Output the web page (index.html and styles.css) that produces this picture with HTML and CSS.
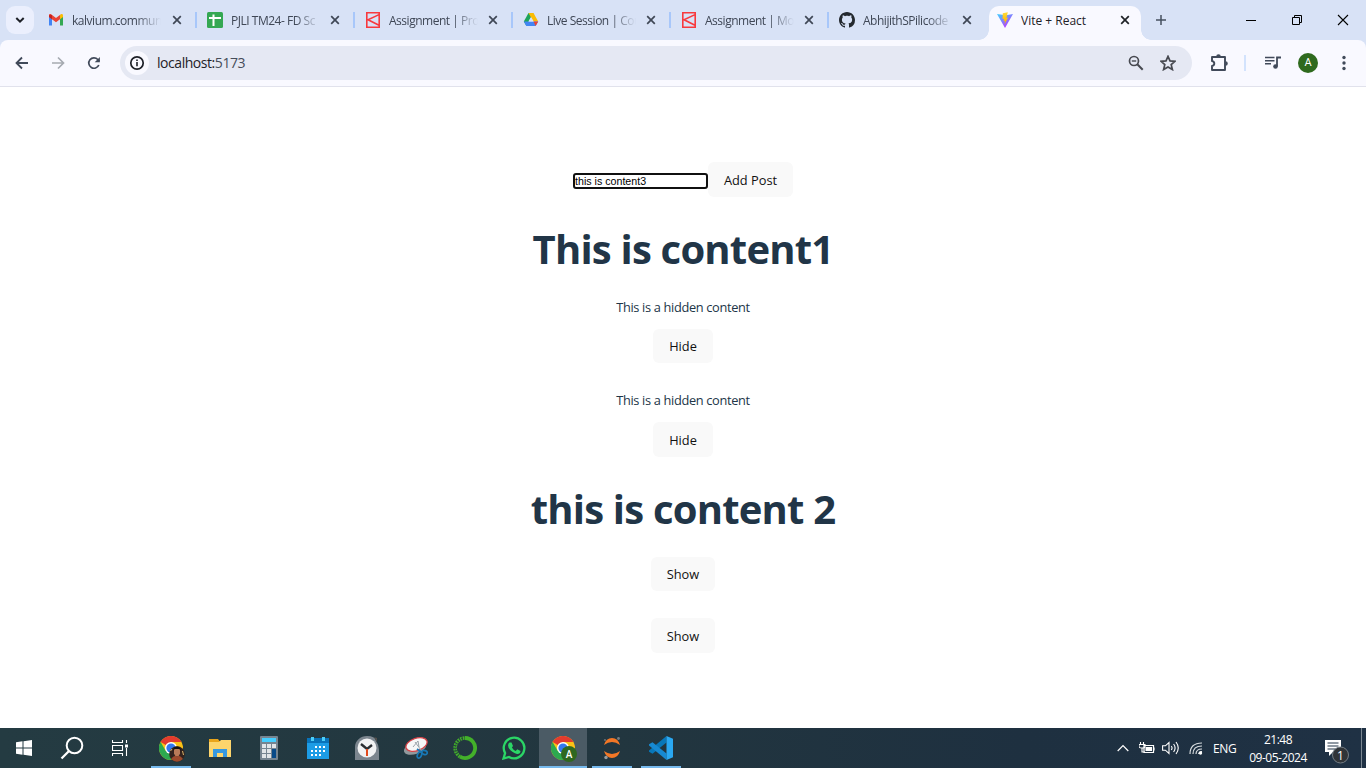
FILE: index.html
```html
<!DOCTYPE html>
<html lang="en">
<head>
<meta charset="utf-8">
<title>Vite + React</title>
<link rel="stylesheet" href="styles.css">
</head>
<body>
<svg class="defs" width="0" height="0">
  <defs>
    <linearGradient id="vblue" x1="0" y1="0" x2=".7" y2="1"><stop offset="0" stop-color="#41d1ff"/><stop offset="1" stop-color="#bd34fe"/></linearGradient>
    <linearGradient id="vyel" x1="0" y1="0" x2="0" y2="1"><stop offset="0" stop-color="#ffdd35"/><stop offset="1" stop-color="#ffa800"/></linearGradient>
    <symbol id="close" viewBox="0 0 10 10"><path d="M1.2 1.2l7.6 7.6M8.8 1.2l-7.6 7.6" stroke="currentColor" stroke-width="1.7"/></symbol>
    <symbol id="kal" viewBox="0 0 16 16"><path d="M1.8.8h12.4v14.4H1.8zM14 2.6L3 7.8l11 5.4" fill="none" stroke="#f8393e" stroke-width="1.6"/></symbol>
    <symbol id="chrome" viewBox="0 0 24 24">
      <circle cx="12" cy="12" r="12" fill="#fbc116"/>
      <path d="M12 12L1.6 6A12 12 0 0 1 22.4 6H12z" fill="#e33b2e"/>
      <path d="M1.6 6A12 12 0 0 0 12 24l5.2-9L12 12 6.8 15z" fill="#2da94f"/>
      <circle cx="12" cy="12" r="6" fill="#fff"/><circle cx="12" cy="12" r="4.6" fill="#3478ee"/>
    </symbol>
  </defs>
</svg>

<div class="tabstrip">
  <div class="search-tabs"><svg width="10" height="10" viewBox="0 0 10 10"><path d="M1.3 3L5 6.7 8.7 3" fill="none" stroke="#1d2027" stroke-width="2"/></svg></div>
  <div class="tab first-tab">
    <svg class="fav" viewBox="0 0 16 16"><path d="M1 4v9.5h3V6.5z" fill="#4285f4"/><path d="M15 4v9.5h-3V6.5z" fill="#34a853"/><path d="M1 3.2C1 2 2.6 1.8 3.4 2.5L8 6l4.6-3.5v4.2L8 10.2 1 5z" fill="#ea4335"/><path d="M12 3l.8-.6C13.8 1.700 15 2.300 15 3.500V5l-3 2.200z" fill="#fbbc04"/><path d="M1 3.300V5l3 2.200V3z" fill="#c5221f"/></svg>
    <span class="title">kalvium.commun</span><svg class="x"><use href="#close"/></svg>
  </div>
  <div class="tab">
    <svg class="fav" viewBox="0 0 16 16"><rect width="16" height="16" rx="1.500" fill="#34a853"/><path d="M2 6h12M6.500 2.500V14" stroke="#fff" stroke-width="2"/></svg>
    <span class="title">PJLI TM24- FD Sc</span><svg class="x"><use href="#close"/></svg>
  </div>
  <div class="tab"><svg class="fav"><use href="#kal"/></svg><span class="title">Assignment | Pro</span><svg class="x"><use href="#close"/></svg></div>
  <div class="tab">
    <svg class="fav" viewBox="0 0 16 16"><path d="M5.500 1L.8 9.500l2.600 4.400L10.500 1z" fill="#1ea45a"/><path d="M5.500 1h5l4.700 8.500h-5z" fill="#fbbc04"/><path d="M3.400 9.500h11.800l-2.600 4.400H3.400L.8 9.500z" fill="#4285f4"/><path d="M10.500 9.500h4.700l-2.600 4.400z" fill="#ea4335"/><path d="M8 5L5.300 9.600h5.400z" fill="#d8e2f6"/></svg>
    <span class="title">Live Session | Cou</span><svg class="x"><use href="#close"/></svg>
  </div>
  <div class="tab"><svg class="fav"><use href="#kal"/></svg><span class="title">Assignment | Mo</span><svg class="x"><use href="#close"/></svg></div>
  <div class="tab last">
    <svg class="fav" viewBox="0 0 16 16"><path fill="#24292f" d="M8 0C3.580 0 0 3.580 0 8c0 3.540 2.290 6.530 5.470 7.590.4.070.550-.17.550-.380 0-.190-.010-.820-.010-1.490-2.010.370-2.530-.490-2.690-.940-.090-.230-.480-.940-.820-1.130-.280-.150-.680-.520-.010-.530.630-.010 1.080.580 1.230.820.720 1.210 1.870.870 2.330.660.070-.520.280-.870.510-1.070-1.780-.2-3.640-.890-3.640-3.950 0-.870.310-1.590.820-2.150-.080-.2-.360-1.020.080-2.120 0 0 .670-.210 2.200.820.640-.180 1.320-.270 2-.270s1.360.090 2 .270c1.530-1.040 2.200-.820 2.200-.820.440 1.100.160 1.920.080 2.120.510.560.820 1.270.820 2.150 0 3.070-1.870 3.750-3.650 3.950.290.250.540.730.540 1.480 0 1.070-.010 1.930-.010 2.200 0 .210.150.460.550.380A8.010 8.010 0 0 0 16 8c0-4.420-3.580-8-8-8z"/></svg>
    <span class="title">AbhijithSPilicode</span><svg class="x"><use href="#close"/></svg>
  </div>
  <div class="tab active">
    <svg class="fav" viewBox="0 0 16 16"><path d="M0 2l8 14 8-14-7 1.200z" fill="url(#vblue)"/><path d="M10.800.2L5.800 1.200 5.500 7l1.600-.3-.5 2.500 1.400-.4-.6 3.800 3.700-7-1.700.3z" fill="url(#vyel)"/></svg>
    <span class="title">Vite + React</span><svg class="x"><use href="#close"/></svg>
  </div>
  <svg class="plus" viewBox="0 0 10 10"><path d="M5 0v10M0 5h10" stroke="#45505f" stroke-width="1.500"/></svg>
  <div class="winbtns">
    <svg width="46" height="40"><path d="M18 20.500h10" stroke="#000"/></svg>
    <svg width="46" height="40"><path d="M18.500 17.500h7v7h-7zM20.500 17.500v-2h7v7h-2" fill="none" stroke="#000"/></svg>
    <svg width="46" height="40"><path d="M18 15l10 10M28 15L18 25" stroke="#000" stroke-width="1.100"/></svg>
  </div>
</div>

<div class="toolbar-bg">
<div class="toolbar">
  <svg class="nav" viewBox="0 0 36 34"><path d="M24 17H13M18 11.500L12.500 17l5.500 5.500" fill="none" stroke="#414a5a" stroke-width="1.800"/></svg>
  <svg class="nav" viewBox="0 0 36 34"><path d="M12 17h11M18 11.500l5.500 5.500-5.500 5.500" fill="none" stroke="#a6aab1" stroke-width="1.700"/></svg>
  <svg class="nav" viewBox="0 0 36 34"><path d="M22.800 19a5.200 5.200 0 1 1-1-5.500l1.500 1.500" fill="none" stroke="#414a5a" stroke-width="1.700"/><path d="M23.900 11v5.200h-5.200z" fill="#414a5a"/></svg>
  <div class="omnibox">
    <div class="info"><svg width="16" height="16" viewBox="0 0 16 16"><circle cx="8" cy="8" r="6.200" fill="none" stroke="#1d2027" stroke-width="1.700"/><path d="M8 7v4.200M8 4.500v1.600" stroke="#1d2027" stroke-width="1.600"/></svg></div>
    <span class="url">localhost:<span>5173</span></span>
    <svg class="oicon" viewBox="0 0 16 16"><circle cx="6" cy="6" r="4.500" fill="none" stroke="#474950" stroke-width="1.700"/><path d="M9.300 9.300l5.400 5.400" stroke="#474950" stroke-width="2"/><path d="M3.800 6h4.400" stroke="#474950" stroke-width="1.400"/></svg>
    <svg class="oicon" viewBox="0 0 16 16"><path d="M8 1.400l2 4.500 5 .45-3.800 3.300 1.200 4.900L8 12l-4.400 2.550 1.200-4.900L1 6.350l5-.45z" fill="none" stroke="#474950" stroke-width="1.700"/></svg>
  </div>
  <svg class="ext" viewBox="0 0 20 20"><path d="M3 4h13v13H3v-4q2.300-.4 2.300-2.500T3 8z" fill="none" stroke="#414a5a" stroke-width="1.900" stroke-linejoin="round"/><path d="M7.200 3.500a2.300 2.300 0 0 1 4.600 0zM16.500 8.200a2.300 2.300 0 0 1 0 4.600z" fill="#414a5a"/></svg>
  <i class="tsep"></i>
  <svg class="music" viewBox="0 0 16 16"><path d="M0 2.500h9.500M0 5.700h9.500M0 8.800h6" stroke="#414a5a" stroke-width="1.600"/><path d="M12 11.500V2.500h4" fill="none" stroke="#414a5a" stroke-width="1.800"/><circle cx="10.500" cy="11.500" r="2.300" fill="#414a5a"/></svg>
  <div class="avatar">A</div>
  <svg class="menu" viewBox="0 0 4 16"><g fill="#414a5a"><circle cx="2" cy="2.500" r="1.700"/><circle cx="2" cy="8" r="1.700"/><circle cx="2" cy="13.500" r="1.700"/></g></svg>
</div>
</div>

<main class="page">
  <div class="form"><input class="field" value="this is content3"><button class="btn add">Add Post</button></div>
  <h1 class="heading">This is content1</h1>
  <p class="hidden-text">This is a hidden content</p>
  <button class="btn hide">Hide</button>
  <p class="hidden-text second">This is a hidden content</p>
  <button class="btn hide tall">Hide</button>
  <h1 class="heading">this is content 2</h1>
  <button class="btn show">Show</button>
  <button class="btn show tall gap">Show</button>
</main>

<footer class="taskbar">
  <div class="cell"><svg width="16" height="16" viewBox="0 0 16 16"><path fill="#fff" d="M0 2.200L6.500 1.300V7.500H0zM7.500 1.200L16 0v7.500H7.500zM0 8.500h6.500v6.200L0 13.800zM7.500 8.500H16V16l-8.500-1.200z"/></svg></div>
  <div class="cell"><svg width="24" height="24" viewBox="0 0 24 24"><circle cx="14.500" cy="9.500" r="7.800" fill="none" stroke="#fff" stroke-width="2"/><path d="M9 15L1.500 22.500" stroke="#fff" stroke-width="2.300"/></svg></div>
  <div class="cell"><svg width="16" height="16" viewBox="0 0 16 16"><path d="M.5 0v2.500h10V0M.5 16v-2.500h10V16M.5 5.500h10v5H.5zM14.500 0v3M14.500 8v8" fill="none" stroke="#fff" stroke-width="1.100"/><path d="M13 4.500h3v3h-3z" fill="#fff"/></svg></div>
  <div class="cell app run first"><svg width="28" height="28" viewBox="0 0 28 28"><use href="#chrome" x="2" y="2" width="24" height="24"/><circle cx="20" cy="20" r="7.800" fill="#33231e"/><path d="M17 15.500q3-3 6 0v4l-1.500 3h-3L17 19.500z" fill="#b87a58"/><path d="M16.300 17q-.3-4.500 3.700-4.500t3.700 4.500l-1.200-2h-5z" fill="#17110f"/><path d="M14 25q2-3 4.500-3.200l1.500 1 1.500-1Q24 22 26 25q-6 5.500-12 0z" fill="#9c4a2c"/><path d="M13.500 17l1.500-2M25.500 17l1 4" stroke="#d9b36a"/></svg></div>
  <div class="cell app"><svg width="22" height="20" viewBox="0 0 22 20"><path d="M0 1h9l1.500 2H22v16H0z" fill="#eaa51b"/><path d="M0 4h10l2-2h10v17H0z" fill="#fdd56c"/><path d="M4 19v-8h14v8h-4v-4H8v4z" fill="#3698df"/></svg></div>
  <div class="cell app"><svg width="18" height="24" viewBox="0 0 18 24"><rect width="18" height="24" rx="1" fill="#768591"/><path d="M2 2h14v4H2z" fill="#45ceff"/><g fill="#e1e5e8"><path d="M2 8h4v4H2zM7 8h4v4H7zM12 8h4v4h-4zM2 13h4v4H2zM7 13h4v4H7zM2 18h4v4H2zM7 18h4v4H7z"/></g><path d="M12 13h4v9h-4z" fill="#084a88"/></svg></div>
  <div class="cell app"><svg width="22" height="24" viewBox="0 0 22 24"><path d="M0 2h22v21H0z" fill="#1c9ce6"/><path d="M0 2h22v5H0z" fill="#0873ba"/><path d="M4 1h3v4H4zM15 1h3v4h-3z" fill="#4ccdf7"/><path d="M8 10h2v2H8zM12 10h2v2h-2zM16 10h2v2h-2zM4 14h2v2H4zM8 14h2v2H8zM12 14h2v2h-2zM16 14h2v2h-2zM4 18h2v2H4zM8 18h2v2H8zM12 18h2v2h-2z" fill="#fff"/></svg></div>
  <div class="cell app"><svg width="24" height="24" viewBox="0 0 24 24"><path d="M0 24V11A12 11 0 0 1 12 0q8 0 9 5 3 4 3 9v10z" fill="#7b858e"/><path d="M19 1l3 1v4z" fill="#534f4b"/><circle cx="12" cy="12" r="9.500" fill="#f1f2f3"/><path d="M6 8l6 5 5-4" fill="none" stroke="#292d31" stroke-width="2.400"/><path d="M12 13v7" stroke="#e34a1d" stroke-width="2"/></svg></div>
  <div class="cell app"><svg width="24" height="24" viewBox="0 0 24 24"><ellipse cx="11" cy="12" rx="11.500" ry="6" transform="rotate(-19 11 12)" fill="#92999d"/><ellipse cx="12.500" cy="8.500" rx="11" ry="6.200" transform="rotate(-19 12.500 8.500)" fill="#f6f7f8" stroke="#d84348" stroke-width="1.300"/><path d="M9 11l5-6 1 6M11 6l6 8" stroke="#9aa3aa" stroke-width="1" fill="none"/><g fill="none" stroke="#1878b5" stroke-width="1.700"><path d="M13 13l5 3.500"/><ellipse cx="15.500" cy="19" rx="2" ry="3.200" transform="rotate(25 15.500 19)"/><ellipse cx="20.500" cy="16.500" rx="2.800" ry="2" transform="rotate(20 20.500 16.500)"/></g></svg></div>
  <div class="cell app"><svg width="24" height="24" viewBox="0 0 24 24"><path d="M12 2a10 10 0 1 1-5 18.600" fill="none" stroke="#43b02a" stroke-width="3.800"/><path d="M7 20.600A10 10 0 0 1 12 2" fill="none" stroke="#43b02a" stroke-width="3.500" stroke-dasharray="1.800 .8"/><path d="M4.300 18A10 10 0 0 1 10 2.200" fill="none" stroke="#253b42" stroke-width="1" stroke-dasharray="1 1.500"/></svg></div>
  <div class="cell app"><svg width="24" height="24" viewBox="0 0 24 24"><path d="M1.500 22.500l1.600-5.400A10.300 10.300 0 1 1 7 21z" fill="none" stroke="#2bd566" stroke-width="2.300"/><path d="M7.500 6.500l2-.1L11 10l-1.100 1.500q1.300 2.400 3.800 3.400l1.600-1.600 3.200 1.600q0 3.200-3.500 3-2-.2-4.300-1.800-5-4-4.600-7.200.2-1.700 1.400-2.400z" fill="#2bd566"/></svg></div>
  <div class="cell app run current"><svg width="28" height="28" viewBox="0 0 28 28"><use href="#chrome" x="2" y="2" width="24" height="24"/><circle cx="20" cy="20" r="8" fill="#2f681f"/><text x="20" y="24" class="badge-a">A</text></svg></div>
  <div class="cell app run"><svg width="18" height="24" viewBox="0 0 18 24"><path d="M1 9q2-7 8-7t8 7Q9 3 1 9zM1 15q2 7 8 7t8-7q-8 6-16 0z" fill="#f37726"/><circle cx="15.500" cy="2.500" r="1.400" fill="#747b81"/><circle cx="3" cy="21.500" r="1.700" fill="#979ca0"/><circle cx="2" cy="4" r=".9" fill="#747b81"/></svg></div>
  <div class="cell app run"><svg width="24" height="24" viewBox="0 0 24 24"><path d="M17.500 0v6.500L3.500 17.700 0 15.800v-1.400z" fill="#0877b9"/><path d="M17.500 24v-6.500L3.500 6.300 0 8.200v1.400z" fill="#1789d2"/><path d="M17.500 0L24 2.800v18.400L17.500 24z" fill="#2aa8f2"/></svg></div>

  <div class="tray">
    <svg class="tr chev" viewBox="0 0 12 8"><path d="M.7 7L6 1.500 11.300 7" fill="none" stroke="#fff" stroke-width="1.200"/></svg>
    <svg class="tr bat" viewBox="0 0 16 12"><path d="M5 3.500h9.500v7H5zM15 5.500v3" fill="none" stroke="#fff" stroke-width="1.200"/><path d="M6.500 5h6.500v4H6.500z" fill="#fff"/><path d="M1.500 0v3M4.500 0v3M0 2.500h6v2q0 1.500-3 1.500T0 4.500zM3 6v4h3" fill="none" stroke="#fff" stroke-width="1.100"/></svg>
    <svg class="tr vol" viewBox="0 0 17 14"><path d="M.6 4.800h2.800L7 1.500v11L3.400 9.200H.6zM9.300 5q1.500 2 0 4M11.600 3q3 4 0 8M14 1q4.500 6 0 12" fill="none" stroke="#fff" stroke-width="1.100"/></svg>
    <svg class="tr wifi" viewBox="0 0 14 14"><g fill="none" stroke="#d8dde0" stroke-width="1.200"><path d="M1 13Q1 2 13 2M4 13q0-8 9-8M7 13q0-5 6-5"/></g><circle cx="11.500" cy="12" r="1.700" fill="#fff"/><path d="M9.500 13q0-2.500 3.500-2.500" fill="none" stroke="#fff"/></svg>
    <span class="lang">ENG</span>
    <div class="clock"><span class="time">21:48</span><span class="date">09-05-2024</span></div>
    <svg class="note" viewBox="0 0 26 26"><path d="M1 2h16v12H9l-4 4v-4H1z" fill="#fff"/><path d="M3.500 5h11M3.500 8h11M3.500 11h8" stroke="#24374a" stroke-width="1.100"/><circle cx="16.500" cy="17" r="8" fill="#303438" stroke="#747d85"/><text x="16.500" y="21.500" class="badge-n">1</text></svg>
    <i class="desk"></i>
  </div>
</footer>
</body>
</html>
```
FILE: styles.css
```css
* { box-sizing: border-box; }
body {
  margin: 0;
  width: 1366px;
  height: 768px;
  overflow: hidden;
  display: flex;
  flex-direction: column;
  font-family: "Open Sans", "Noto Sans", sans-serif;
  background: #fff;
}
svg { display: block; flex: none; }
.defs { position: absolute; }

.tabstrip { display: flex; height: 40px; padding-left: 6px; background: #d8e2f6; flex: none; }
.search-tabs { width: 28px; height: 28px; margin: 6px 4px 0 0; border-radius: 9px; background: #ebeffd; display: grid; place-items: center; }
.tab { width: 158px; display: flex; align-items: center; padding: 0 0 0 11px; position: relative; flex: none; color: #3f4756; }
.first-tab { padding-left: 10px; }
.tab::after { content: ""; position: absolute; right: -1px; top: 12px; width: 2px; height: 16px; background: #a8c7fa; }
.tab.last::after { display: none; }
.fav { width: 16px; height: 16px; margin-right: 8px; }
.title {
  width: 89px; margin-right: 10px; overflow: hidden; white-space: nowrap;
  font-size: 12px; line-height: 18px; letter-spacing: -.48px; padding-top: 1px;
  -webkit-mask-image: linear-gradient(to right, #000 72%, transparent 100%);
  mask-image: linear-gradient(to right, #000 72%, transparent 100%);
}
.first-tab .title { margin-right: 11px; }
.x { width: 10px; height: 10px; color: #3f4756; }
.active { width: 152px; height: 34px; margin: 6px 0 0 3px; padding: 0 0 6px 8px; background: #f9f9ff; border-radius: 10px 10px 0 0; color: #1f2227; }
.active .title { width: 93px; margin-right: 6px; letter-spacing: 0; -webkit-mask-image: none; mask-image: none; }
.active .x { color: #1f2227; }
.active::before, .active::after {
  content: ""; position: absolute; top: auto; bottom: 0; width: 10px; height: 10px;
  background: radial-gradient(circle at 0 0, transparent 9.500px, #f9f9ff 10px);
}
.active::before { left: -10px; }
.active::after { right: -10px; background: radial-gradient(circle at 100% 0, transparent 9.500px, #f9f9ff 10px); }
.plus { width: 10px; height: 10px; margin: 15px 0 0 15px; }
.winbtns { display: flex; margin-left: auto; }

.toolbar-bg { background: #d8e2f6; flex: none; }
.toolbar { height: 47px; display: flex; align-items: center; padding: 0 0 1px 4px; background: #f9f9ff; border-bottom: 1px solid #e1e2ec; border-radius: 8px 8px 0 0; }
.nav { width: 36px; height: 34px; }
.omnibox { width: 1072px; height: 34px; margin-left: 8px; padding: 0 16px 0 5px; display: flex; align-items: center; border-radius: 17px; background: #e5e8f3; }
.info { width: 24px; height: 24px; border-radius: 50%; background: #f9f9ff; display: grid; place-items: center; }
.url { margin: 0 auto 0 8px; padding-top: 1px; font-size: 14px; line-height: 20px; letter-spacing: -.45px; color: #1f2227; }
.url span { color: #464c59; }
.oicon { width: 16px; height: 16px; margin-left: 16px; }
.ext { width: 20px; height: 20px; margin-left: 17px; }
.tsep { width: 2px; height: 16px; margin-left: 15px; background: #d3e3fd; }
.music { width: 16px; height: 16px; margin-left: 19px; }
.avatar { width: 20px; height: 20px; margin-left: 17px; border-radius: 50%; background: #2f6a1e; color: #fff; font: 11px/20px Roboto, sans-serif; text-align: center; }
.menu { width: 4px; height: 16px; margin-left: 24px; }

.page { height: 641px; flex: none; padding-top: 75px; display: flex; flex-direction: column; align-items: center; color: #213547; }
.form { display: flex; align-items: center; height: 35px; }
.field { width: 135px; height: 16px; margin: 3px 0 0; padding: 0; border: 2px solid #101010; border-radius: 3px; outline: 0; background: #fff; font: 10.670px/12px "Liberation Sans", Arial, sans-serif; color: #000; }
.btn { border: 0; border-radius: 6px; padding: 0 0 1px; background: #f9f9f9; color: #111; font: 500 12.800px/18px "Open Sans", sans-serif; height: 34px; flex: none; }
.add { width: 85px; height: 35px; padding: 1px 0 0; }
.hide { width: 60px; }
.show { width: 64px; }
.tall { height: 35px; padding: 1px 0 0; }
.heading { margin: 27px 0 28px; padding-top: 2px; height: 45px; font-size: 40px; line-height: 45px; font-weight: 700; letter-spacing: -.8px; white-space: nowrap; }
.hidden-text { margin: 0 0 12px; font-size: 12.800px; line-height: 20px; letter-spacing: -.33px; }
.second { margin-top: 27px; }
.gap { margin-top: 27px; }

.taskbar { height: 40px; flex: none; display: flex; color: #fff; background: linear-gradient(90deg, #243b42, #22363f 45%, #1e3040 75%, #1f3144); }
.cell { width: 48px; height: 40px; display: grid; place-items: center; flex: none; }
.app { width: 49px; position: relative; }
.first { margin-left: 2px; }
.run::after { content: ""; position: absolute; left: 5px; bottom: 0; width: 40px; height: 2px; background: #76b9ed; }
.current { width: 48px; margin-left: 1px; background: #4b5b65; }
.current::after { left: 0; width: 48px; }
.badge-a { font: 500 10px Roboto, sans-serif; fill: #fff; text-anchor: middle; }
.tray { margin-left: auto; display: flex; align-items: center; font-size: 12px; }
.chev { width: 12px; height: 8px; margin-right: 10px; }
.bat { width: 16px; height: 12px; margin-right: 7px; }
.vol { width: 17px; height: 14px; margin-right: 10px; }
.wifi { width: 14px; height: 14px; margin-right: 10px; }
.lang { width: 24px; letter-spacing: -.4px; }
.clock { width: 60px; margin-left: 11px; display: flex; flex-direction: column; align-items: center; line-height: 18px; padding-top: 1px; white-space: nowrap; }
.time, .date { letter-spacing: -.5px; }
.note { width: 26px; height: 26px; margin: 5px 0 0 16px; }
.badge-n { font: 12px "Open Sans", sans-serif; fill: #fff; text-anchor: middle; }
.desk { width: 1px; height: 40px; margin: 0 4px 0 11px; background: #7b8791; }
```
